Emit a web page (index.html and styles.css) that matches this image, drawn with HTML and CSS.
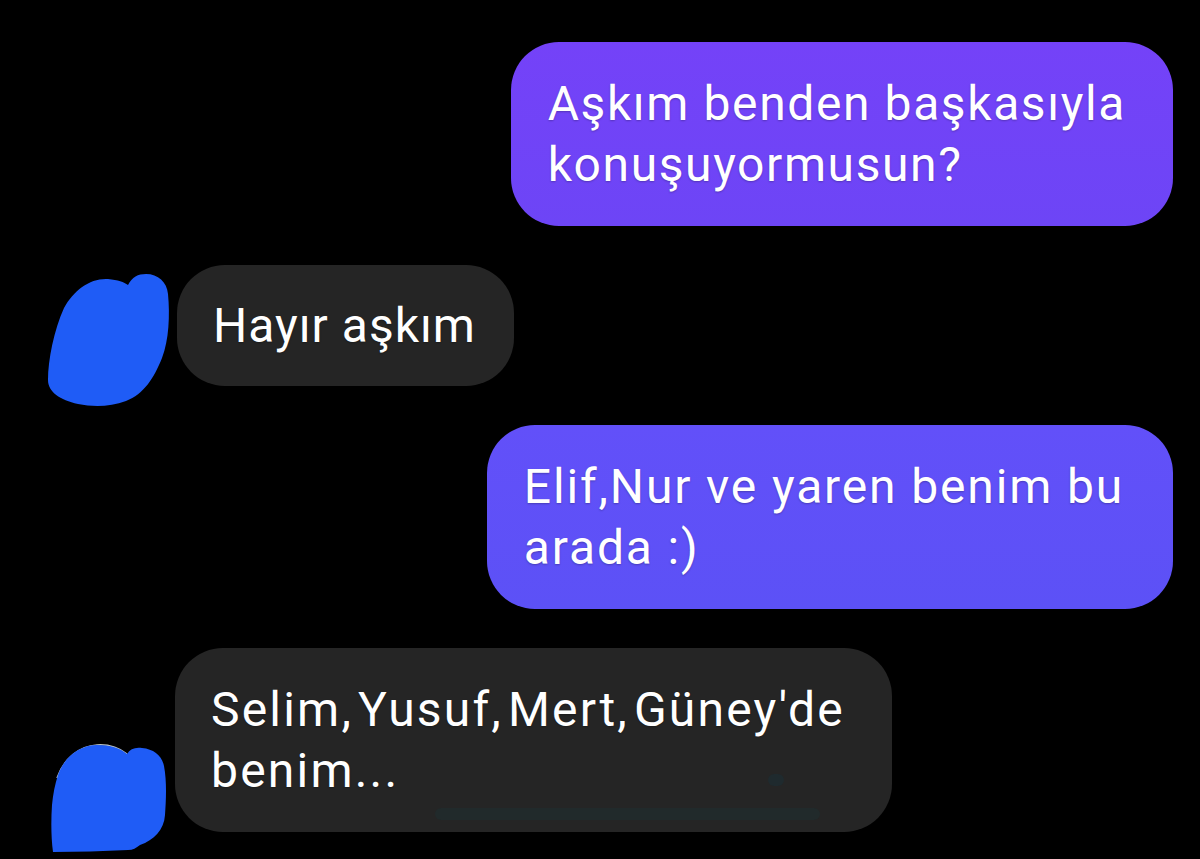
FILE: index.html
```html
<!DOCTYPE html>
<html lang="tr">
<head>
    <meta charset="UTF-8">
    <meta name="viewport" content="width=device-width, initial-scale=1.0">
    <title>Sohbet</title>
    <link rel="stylesheet" href="styles.css">
</head>
<body>
    <div class="sohbet">
        <div class="satir giden">
            <div class="balon mor-1">Aşkım benden başkasıyla<br>konuşuyormusun?</div>
        </div>

        <div class="satir gelen">
            <svg class="avatar avatar-1" width="122" height="138" viewBox="0 0 122 138">
                <path d="M60 9 C70 10 76 12 80 15 C84 7 90 4 98 4 C110 4 119 12 120 24 C122 45 121 70 114 88 C106 108 96 124 78 131 C62 137 45 137 30 134 C12 130 0 122 0 110 C0 90 6 60 16 38 C26 20 42 8 60 9 Z" />
            </svg>
            <div class="balon gri kisa">Hayır aşkım</div>
        </div>

        <div class="satir giden">
            <div class="balon mor-2">Elif,Nur ve yaren benim bu<br>arada :)</div>
        </div>

        <div class="satir gelen">
            <svg class="avatar avatar-2" width="120" height="112" viewBox="0 0 120 112">
                <path class="kenar" d="M9 36 C16 16 32 4 49 3 C62 2 73 7 79 12" />
                <path d="M10 33 C16 15 32 3 49 3 C62 3 72 6 79 12 C82 7 87 5 94 6 C106 7 114 14 116 24 C119 40 118 58 117 73 C116 88 106 98 92 103 C88 106 85 108 80 108 C55 109 30 110 5 110 C3 95 3 78 4 63 C5 52 7 42 10 33 Z" />
            </svg>
            <div class="balon gri son">Selim<span class="virgul">,</span>Yusuf<span class="virgul">,</span>Mert<span class="virgul">,</span>Güney'de<br>benim...</div>
        </div>
    </div>
</body>
</html>
```

FILE: styles.css
```css
:root {
    --arka: #000000;
    --mor-ust: #7442f8;
    --mor-alt: #6d45f6;
    --mavi-ust: #6250f9;
    --mavi-alt: #5c51f6;
    --gri: #252525;
    --beyaz: #ffffff;
    --boya: #1f5cf6;
}

html, body {
    margin: 0;
    background-color: var(--arka);
}

.sohbet {
    font-family: Roboto, 'Noto Sans', sans-serif;
    color: var(--beyaz);
    padding: 42px 27px 0 48px;
    display: flex;
    flex-direction: column;
    gap: 39px;
    height: 859px;
    box-sizing: border-box;
    overflow: hidden;
}

.satir {
    display: flex;
}

.giden {
    justify-content: flex-end;
}

.gelen {
    align-items: flex-end;
    gap: 7px;
}

.balon {
    font-size: 48px;
    line-height: 61px;
    letter-spacing: 1.6px;
    padding: 31px 47px 31px 37px;
    border-radius: 48px;
    text-shadow: 0 1px 2px rgba(0, 0, 0, 0.25);
    white-space: nowrap;
}

.mor-1 {
    background: linear-gradient(180deg, var(--mor-ust), var(--mor-alt));
}

.mor-2 {
    background: linear-gradient(180deg, var(--mavi-ust), var(--mavi-alt));
    letter-spacing: 1.85px;
    padding-right: 49px;
}

.gri {
    background-color: var(--gri);
    padding-left: 36px;
}

.kisa {
    letter-spacing: 1px;
    padding: 30px 38px 30px 36px;
}

.son {
    position: relative;
    letter-spacing: 2.2px;
}

.virgul {
    margin-right: 5px;
}

/* ekran görüntüsündeki silik izler */
.son::before {
    content: "";
    position: absolute;
    left: 260px;
    right: 72px;
    bottom: 12px;
    height: 12px;
    border-radius: 6px;
    background-color: #212a2b;
}

.son::after {
    content: "";
    position: absolute;
    right: 108px;
    bottom: 46px;
    width: 16px;
    height: 12px;
    border-radius: 6px;
    background-color: #1f2a2e;
}

.avatar {
    flex-shrink: 0;
    margin-bottom: -22px;
    fill: var(--boya);
}

.avatar .kenar {
    fill: none;
    stroke: #b9c2c4;
    stroke-width: 1.5;
}
```
